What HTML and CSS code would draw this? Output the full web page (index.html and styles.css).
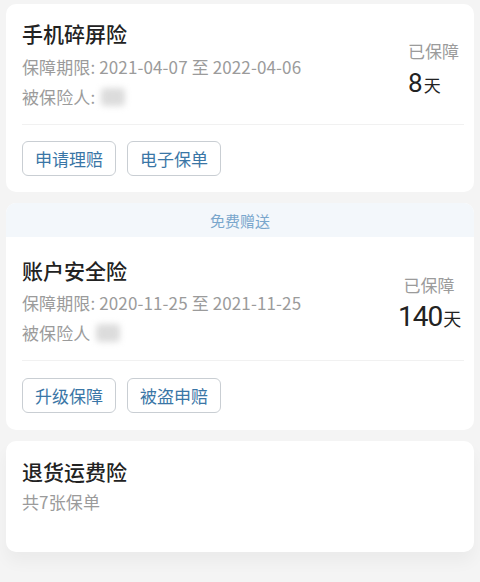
FILE: index.html
```html
<!DOCTYPE html>
<html lang="zh-CN">
<head>
<meta charset="utf-8">
<link rel="stylesheet" href="styles.css">
</head>
<body>
<div class="list">
  <section class="card">
    <div class="body">
      <div class="top">
        <div class="info">
          <div class="title">手机碎屏险</div>
          <div class="line">保障期限: 2021-04-07 至 2022-04-06</div>
          <div class="line">被保险人: <span class="blur"></span></div>
        </div>
        <div class="days days-left">
          <div class="days-label">已保障</div>
          <div class="days-val"><span class="num">8</span><span class="unit">天</span></div>
        </div>
      </div>
      <div class="divider"></div>
      <div class="actions">
        <span class="btn">申请理赔</span>
        <span class="btn">电子保单</span>
      </div>
    </div>
  </section>

  <section class="card">
    <div class="band">免费赠送</div>
    <div class="body body-2">
      <div class="top">
        <div class="info">
          <div class="title">账户安全险</div>
          <div class="line">保障期限: 2020-11-25 至 2021-11-25</div>
          <div class="line">被保险人 <span class="blur"></span></div>
        </div>
        <div class="days days-2">
          <div class="days-label">已保障</div>
          <div class="days-val"><span class="num num-lg">140</span><span class="unit">天</span></div>
        </div>
      </div>
      <div class="divider"></div>
      <div class="actions">
        <span class="btn">升级保障</span>
        <span class="btn">被盗申赔</span>
      </div>
    </div>
  </section>

  <section class="card card-last">
    <div class="body body-3">
      <div class="title">退货运费险</div>
      <div class="line line-3">共7张保单</div>
    </div>
  </section>
</div>
</body>
</html>
```
FILE: styles.css
```css
* { box-sizing: border-box; }
html, body { margin: 0; padding: 0; }
body {
  background: #f4f4f4;
  font-family: "Noto Sans CJK SC", "Noto Sans", sans-serif;
  width: 480px;
  height: 582px;
  overflow: hidden;
}
.list {
  padding: 4px 6px 0 6px;
  display: flex;
  flex-direction: column;
  gap: 11px;
}
.card {
  background: #fff;
  border-radius: 10px;
  overflow: hidden;
}
.card-last {
  box-shadow: 0 10px 16px rgba(0, 0, 0, 0.04);
}
.body {
  padding: 15px 10px 16px 16px;
}
.body-2 { padding: 19px 10px 17px 16px; }
.body-3 { padding: 16px 16px 34px 16px; }
.top {
  display: flex;
  justify-content: space-between;
}
.title {
  font-size: 21px;
  line-height: 28px;
  font-weight: 500;
  color: #222;
}
.info .title { margin-bottom: 5px; }
.body-2 .info .title { margin-bottom: 4px; }
.line {
  font-size: 17px;
  line-height: 30px;
  color: #9b9b9b;
  display: flex;
  align-items: center;
  white-space: nowrap;
  letter-spacing: 0.12px;
}
.line-3 { line-height: 33px; }
.blur {
  display: inline-block;
  width: 24px;
  height: 18px;
  margin-left: 6px;
  background: #dcdcdc;
  filter: blur(3px);
  border-radius: 4px;
}
.days {
  margin-right: 5px;
  padding-top: 19px;
  color: #9b9b9b;
}
.days-left { text-align: left; width: 51px; }
.days-2 { text-align: center; width: 62px; padding-top: 0; margin-top: 16px; margin-right: 4px; }
.days-label {
  font-size: 17px;
  line-height: 26px;
}
.days-val {
  color: #222;
  line-height: 38px;
  white-space: nowrap;
}
.num {
  font-family: Roboto, "Noto Sans", sans-serif;
  font-size: 26px;
  font-weight: 400;
}
.num-lg { font-size: 28px; letter-spacing: -1px; }
.unit {
  font-size: 17px;
  margin-left: 1px;
}
.days-2 .unit { font-size: 18px; }
.divider {
  height: 1px;
  background: #f1f1f1;
  margin: 12px 0 16px 0;
}
.body-2 .divider { margin: 12px 0 17px 0; }
.actions {
  display: flex;
  gap: 11px;
}
.btn {
  display: inline-flex;
  align-items: center;
  justify-content: center;
  width: 94px;
  height: 35px;
  border: 1px solid #c9ced3;
  border-radius: 6px;
  font-size: 17px;
  color: #3a76a6;
}
.band {
  background: #f3f7fb;
  height: 34px;
  display: flex;
  align-items: center;
  justify-content: center;
  font-size: 15px;
  color: #79a6cc;
}
```
